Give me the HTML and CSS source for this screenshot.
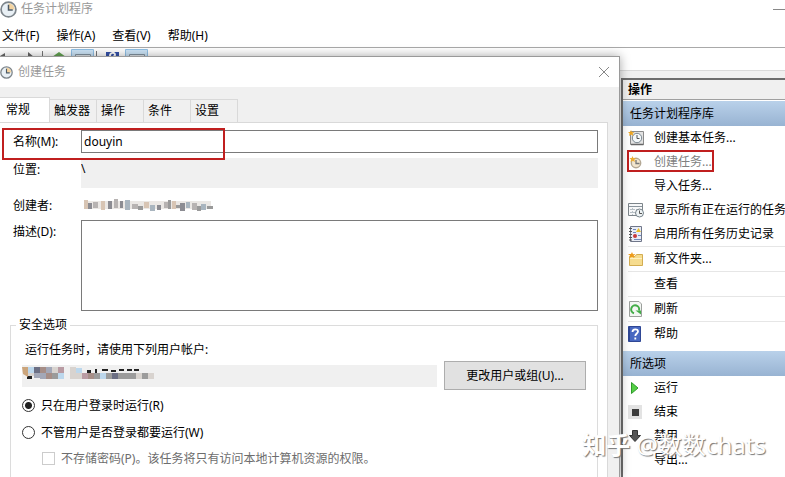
FILE: index.html
```html
<!DOCTYPE html>
<html lang="zh-CN">
<head>
    <meta charset="UTF-8">
    <meta name="viewport" content="width=device-width, initial-scale=1.0">
    <title>任务计划程序</title>
    <link rel="stylesheet" href="styles.css">
</head>
<body>

<div class="window">
    <header class="titlebar">
        <svg class="clock" viewBox="0 0 16 16" width="17" height="17">
            <circle cx="8" cy="8" r="7" fill="#e9f0f5" stroke="#7d858b" stroke-width="1.6"/>
            <path d="M8 8V2.2A5.8 5.8 0 0 1 13.8 8z" fill="#f3d3a0"/>
            <path d="M8 3.5V8.5H12" fill="none" stroke="#4d5a66" stroke-width="1.4"/>
        </svg>
        <h1>任务计划程序</h1>
        <button class="minimize" type="button" aria-label="最小化"></button>
    </header>

    <nav class="menubar">
        <a href="#">文件(F)</a>
        <a href="#">操作(A)</a>
        <a href="#">查看(V)</a>
        <a href="#">帮助(H)</a>
    </nav>

    <div class="toolbar">
        <svg viewBox="0 0 160 20" width="160" height="20">
            <path d="M0 8L5 5V11zM28 4L34 9H28z" fill="#666"/>
            <path d="M42.500 3V18M96.500 3V18" stroke="#777"/>
            <path d="M52 9L59 4L66 9V14H52z" fill="#63a352"/>
            <path d="M71.500 1.500H93.500V18H71.500zM125.500 1.500H147.500V18H125.500z" fill="#cce4f7" stroke="#90c0e6"/>
            <path d="M75.500 6.500H90.500V16H75.500zM129.500 6.500H144.500V16H129.500z" fill="#dfe5ea" stroke="#8494a1"/>
            <path d="M106 4H119V18H106z" fill="#3552a8"/>
            <path d="M110 8C110 4 115 4 115 7L113 10" fill="none" stroke="#fff" stroke-width="2"/>
        </svg>
    </div>

    <div class="workspace">
        <aside class="actions">
            <h2>操作</h2>
            <h3>任务计划程序库</h3>
            <ul>
                <li><a href="#">
                    <svg viewBox="0 0 16 16" width="16" height="16">
                        <path d="M2.500 1.500H15.500V14.500H2.500z" fill="#e2e2e2" stroke="#8a8a8a"/>
                        <path d="M3 14.500H15.500" stroke="#666" stroke-width="1.500"/>
                        <circle cx="9" cy="8" r="4.700" fill="#f4f8fa" stroke="#7a8790"/>
                        <path d="M9 5V8.500H11.500" fill="none" stroke="#555"/>
                        <path d="M3 0L4 2.200L6.500 2L4.600 3.700L5.500 6L3 4.600L1 6L1.600 3.600L0 2L2.200 2z" fill="#eda521"/>
                    </svg>创建基本任务...</a></li>
                <li><a href="#" class="current">
                    <svg viewBox="0 0 16 16" width="16" height="16">
                        <circle cx="8" cy="9" r="4.700" fill="#f2e6cf" stroke="#b4a895" stroke-width="1.400"/>
                        <path d="M8 6V9.500H11.500" fill="none" stroke="#777" stroke-width="1.300"/>
                        <path d="M4.500 2L5.500 4.200L8 4L6.200 5.700L7 8L4.700 6.700L2.500 8L3 5.600L1.500 4L3.700 4z" fill="#edad31"/>
                    </svg>创建任务...</a></li>
                <li><a href="#"><span class="blank"></span>导入任务...</a></li>
                <li><a href="#">
                    <svg viewBox="0 0 16 16" width="16" height="16">
                        <path d="M.5 1.500H14.500V13.500H.5z" fill="#f7f8f9" stroke="#7d858b"/>
                        <path d="M1 4.500H14" stroke="#8a949c"/>
                        <path d="M2 7.500H9M2 10.500H8M4.500 6V13" stroke="#b7bfc5" stroke-dasharray="2 1"/>
                        <circle cx="11.500" cy="11" r="4" fill="#eef3f5" stroke="#77838b"/>
                        <path d="M11.500 8.500V11.500H14" fill="none" stroke="#555"/>
                    </svg>显示所有正在运行的任务</a></li>
                <li><a href="#">
                    <svg viewBox="0 0 16 16" width="16" height="16">
                        <path d="M2.500 .5H13.500V15.500H2.500z" fill="#e9edf6" stroke="#70778a"/>
                        <path d="M1 2.500H4M1 5.500H4M1 8.500H4M1 11.500H4M1 14H4" stroke="#555"/>
                        <path d="M5 3.500H8M5 6.500H8M10 9.500H13M6 13.500H13" stroke="#7289bb"/>
                        <path d="M10.500 2L13 6H8z" fill="#edbe25"/>
                        <circle cx="7" cy="10" r="2" fill="#c8393b"/>
                    </svg>启用所有任务历史记录</a></li>
                <li class="split"><a href="#">
                    <svg viewBox="0 0 16 16" width="16" height="16">
                        <path d="M1.500 5.500H7L8.500 3.500H14.500V14.500H1.500z" fill="#f6dc8f" stroke="#d3ad51"/>
                        <path d="M2 7.500H14" stroke="#fff1bf"/>
                        <path d="M4 1L5 3.200L7.500 3L5.700 4.700L6.500 7L4 5.700L1.500 7L2 4.600L0 3L3 3z" fill="#ee9c1c"/>
                    </svg>新文件夹...</a></li>
                <li class="split"><a href="#"><span class="blank"></span>查看</a></li>
                <li class="split"><a href="#">
                    <svg viewBox="0 0 16 16" width="16" height="16">
                        <path d="M1.500 .5H11L13.500 3V15.500H1.500z" fill="#f4f6f4" stroke="#9ca09c"/>
                        <path d="M6 12.200A4 4 0 1 1 11 9.500" fill="none" stroke="#43ad48" stroke-width="2"/>
                        <path d="M7.500 9.500H13V13.500z" fill="#43ad48"/>
                    </svg>刷新</a></li>
                <li class="split"><a href="#">
                    <svg viewBox="0 0 16 16" width="16" height="16">
                        <path d="M.5 .5H12.500V15.500H.5z" fill="#4868c1" stroke="#2f4795"/>
                        <path d="M1.500 1V15" stroke="#2f4795"/>
                        <path d="M4.500 6C4.500 2.500 10 2.500 10 5.500C10 7.500 7.300 7.500 7.300 10M7.300 11.500V13.500" fill="none" stroke="#fff" stroke-width="1.800"/>
                    </svg>帮助</a></li>
            </ul>
            <h3>所选项</h3>
            <ul>
                <li><a href="#">
                    <svg viewBox="0 0 16 16" width="16" height="16">
                        <path d="M3.500 2.500L10 8L3.500 13.500z" fill="#55cf45" stroke="#2f9c2b"/>
                    </svg>运行</a></li>
                <li><a href="#">
                    <svg viewBox="0 0 16 16" width="16" height="16">
                        <path d="M0 1H14V15H0z" fill="#e3e3e3"/>
                        <path d="M4 5H11V12H4z" fill="#3d3d3d"/>
                    </svg>结束</a></li>
                <li><a href="#">
                    <svg viewBox="0 0 16 16" width="16" height="16">
                        <path d="M4.500 2.500H9.500V7.500H12.500L7 13.500L1.500 7.500H4.500z" fill="#555" stroke="#333"/>
                    </svg>禁用</a></li>
                <li><a href="#"><span class="blank"></span>导出...</a></li>
            </ul>
        </aside>
    </div>

    <section class="dialog">
        <header class="dialog-title">
            <svg class="clock" viewBox="0 0 16 16" width="13" height="13">
                <circle cx="8" cy="8" r="7" fill="#e9f0f5" stroke="#7d858b" stroke-width="1.6"/>
                <path d="M8 8V2.200A5.800 5.800 0 0 1 13.800 8z" fill="#f3d3a0"/>
                <path d="M8 3.500V8.500H12" fill="none" stroke="#4d5a66" stroke-width="1.400"/>
            </svg>
            <h2>创建任务</h2>
            <button class="close" type="button" aria-label="关闭">
                <svg viewBox="0 0 12 12" width="12" height="12"><path d="M1 1L11 11M11 1L1 11" stroke="#888"/></svg>
            </button>
        </header>

        <div class="tabs">
            <button type="button" class="tab active">常规</button>
            <button type="button" class="tab">触发器</button>
            <button type="button" class="tab">操作</button>
            <button type="button" class="tab">条件</button>
            <button type="button" class="tab">设置</button>
        </div>

        <form class="page">
            <div class="field name">
                <label for="name">名称(M):</label>
                <input type="text" id="name" value="douyin">
                <span class="highlight"></span>
            </div>
            <div class="field location">
                <label for="location">位置:</label>
                <input type="text" id="location" value="\" readonly>
            </div>
            <div class="field author">
                <span>创建者:</span>
                <svg viewBox="0 0 134 16" width="134" height="16">
                    <path d="M3 4H130V12H3z" fill="#ebe8e5"/>
                    <path d="M3 3H7V12H3zM20 4H24V13H20zM63 5H68V11H63zM91 4H95V12H91z" fill="#d8c5b4"/>
                    <path d="M7 6H11V12H7zM27 4H31V12H27zM39 4H42V11H39zM76 8H80V13H76zM99 6H104V14H99z" fill="#8c8c92"/>
                    <path d="M12 5H17V11H12zM33 2H37V11H33zM51 7H57V12H51zM83 5H87V11H83zM111 6H116V13H111z" fill="#b7b3b2"/>
                    <path d="M44 3H49V13H44zM69 8H74V14H69zM105 5H109V11H105zM120 7H125V13H120z" fill="#a9b5bf"/>
                    <path d="M57 9H62V13H57zM87 3H90V12H87zM95 8H99V11H95zM116 9H120V14H116zM126 9H132V12H126z" fill="#9a9a9a"/>
                </svg>
            </div>
            <div class="field description">
                <label for="description">描述(D):</label>
                <textarea id="description"></textarea>
            </div>

            <fieldset>
                <legend>安全选项</legend>
                <p>运行任务时，请使用下列用户帐户:</p>
                <div class="account">
                    <div class="account-name">
                        <svg viewBox="0 0 134 16" width="134" height="16">
                            <path d="M65 5H69V8H65zM73 4H75V8H73zM80 4H86V6H80zM89 5H94V7H89zM97 4H102V6H97zM105 4H110V6H105zM112 4H117V6H112zM5 11H10V14H5z" fill="#222"/>
                            <path d="M0 2H6V8L6 12L1 9z" fill="#cba57c"/>
                            <path d="M6 2H12V8H6zM54 3H60V8H54zM78 8H84V14H78zM36 8H42V14H36z" fill="#bcd7ec"/>
                            <path d="M12 2H18V8H12zM90 8H96V14H90z" fill="#6c6f84"/>
                            <path d="M18 2H24V8H18zM24 8H30V14H24zM66 8H72V14H66z" fill="#a68e87"/>
                            <path d="M30 8H36V14H30zM84 8H90V14H84zM96 8H114V14H96zM120 8H126V14H120zM72 8H78V14H72z" fill="#9b9b9b"/>
                            <path d="M36 2H42V8H36zM60 8H66V14H60z" fill="#b99ba3"/>
                            <path d="M24 2H30V8H24zM18 8H24V14H18zM12 8H18V13H12z" fill="#a3a8b8"/>
                            <path d="M30 2H36V8H30zM6 8H12V11H6zM48 2H54V14H48zM54 8H60V14H54zM114 8H120V14H114zM126 8H132V14H126z" fill="#d8d3cf"/>
                        </svg>
                    </div>
                    <button type="button" class="change">更改用户或组(U)...</button>
                </div>
                <label class="option"><input type="radio" name="logon" checked>只在用户登录时运行(R)</label>
                <label class="option"><input type="radio" name="logon">不管用户是否登录都要运行(W)</label>
                <label class="option sub"><input type="checkbox" disabled>不存储密码(P)。该任务将只有访问本地计算机资源的权限。</label>
            </fieldset>
        </form>
    </section>

    <div class="watermark"><b>知乎</b> @数数chats</div>
</div>

</body>
</html>
```
FILE: styles.css
```css
*, *::after {
    box-sizing: border-box;
}

body {
    margin: 0;
    background-color: white;
    color: black;
    font-family: "Noto Sans", "Noto Sans CJK SC", sans-serif;
    font-size: 12px;
    line-height: 18px;
}

h1, h2, h3, p, ul {
    margin: 0;
    padding: 0;
    font-size: 12px;
    font-weight: normal;
}

button, input, textarea {
    margin: 0;
    font: inherit;
    color: inherit;
}

a {
    color: inherit;
    text-decoration: none;
}

/* Ventana principal */
.window {
    position: relative;
    display: flex;
    flex-direction: column;
    height: 100vh;
    overflow: hidden;
}

.titlebar {
    display: flex;
    align-items: center;
    gap: 4px;
    height: 18px;
    color: #999;
}

.minimize {
    width: 12px;
    height: 1px;
    margin-left: auto;
    padding: 0;
    border: none;
    background-color: #888;
}

.menubar {
    display: flex;
    gap: 17px;
    height: 30px;
    padding: 9px 2px 0;
    border-bottom: 1px solid #a9a9a9;
}

.toolbar {
    height: 23px;
    border-bottom: 1px solid #d9d9d9;
}

.workspace {
    display: flex;
    flex: 1;
    justify-content: flex-end;
    min-height: 0;
    padding-top: 7px;
    background-color: #f0f0f0;
}

.actions {
    width: 164px;
    overflow: hidden;
    border-top: 2px solid #6d6d6d;
    border-left: 2px solid #6d6d6d;
    background-color: white;
    white-space: nowrap;
}

.actions h2 {
    height: 20px;
    padding: 1px 5px;
    border-bottom: 1px solid #a0a0a0;
    background-color: #f0f0f0;
    font-weight: bold;
}

.actions h3 {
    height: 25px;
    padding: 4px 7px;
    background: linear-gradient(#b9d1ea, #98b3d2);
}

.actions h2 + h3 {
    margin-top: 1px;
}

.actions ul {
    list-style: none;
}

.actions ul + h3 {
    margin-top: 5px;
}

.actions li {
    padding-left: 5px;
}

.actions li a {
    display: flex;
    align-items: center;
    gap: 10px;
    height: 24px;
}

.actions li svg, .blank {
    flex: none;
    width: 16px;
}

.actions .split a {
    height: 25px;
    border-top: 1px solid #e6e6e6;
}

.actions .current {
    position: relative;
    color: #808080;
}

.actions .current::after {
    content: "";
    position: absolute;
    top: 0;
    left: -1px;
    width: 87px;
    height: 22px;
    border: 2px solid #c01f1f;
}

/* Cuadro de diálogo */
.dialog {
    position: absolute;
    top: 56px;
    right: 165px;
    bottom: 0;
    left: 0;
    display: flex;
    flex-direction: column;
    border-top: 1px solid #9a9a9a;
    border-right: 1px solid #9a9a9a;
    background-color: #f0f0f0;
    box-shadow: 0 0 10px rgba(0, 0, 0, 0.35);
}

.dialog-title {
    display: flex;
    align-items: center;
    gap: 5px;
    height: 30px;
    padding-right: 9px;
    background-color: white;
    color: #999;
}

.close {
    display: flex;
    margin-left: auto;
    padding: 0;
    border: none;
    background: none;
}

.tabs {
    display: flex;
    align-items: flex-end;
    height: 35px;
}

.tab {
    width: 47px;
    height: 23px;
    padding: 0 4px;
    border: 1px solid #d9d9d9;
    border-left: none;
    border-bottom: none;
    background-color: #f0f0f0;
    text-align: left;
}

.tab.active {
    width: 50px;
    height: 25px;
    padding: 0 6px;
    background-color: white;
}

.page {
    flex: 1;
    min-height: 0;
    margin-right: 11px;
    padding: 7px 9px 0 10px;
    overflow: hidden;
    border-top: 1px solid #d9d9d9;
    border-right: 1px solid #d9d9d9;
    background-color: white;
}

.field {
    position: relative;
    display: grid;
    grid-template-columns: 68px 1fr;
    padding-left: 3px;
}

.field input, .field textarea {
    width: 100%;
    padding: 0 2px;
    border: 1px solid #7a7a7a;
    border-radius: 0;
    background-color: white;
    resize: none;
}

.name {
    z-index: 1;
    height: 28px;
}

.name label {
    padding-top: 3px;
}

.name input {
    height: 23px;
}

.highlight {
    position: absolute;
    top: -2px;
    left: -8px;
    width: 223px;
    height: 32px;
    border: 2px solid #c01f1f;
}

.location {
    height: 39px;
}

.location label {
    padding-top: 3px;
}

.location input {
    height: 30px;
    padding: 0 0 9px;
    border: none;
    background-color: #f0f0f0;
}

.author {
    height: 23px;
}

.description label {
    padding-top: 3px;
}

.description textarea {
    height: 91px;
}

fieldset {
    height: 200px;
    margin: 5px 0 0;
    padding: 7px 11px 0;
    border: 1px solid #dcdcdc;
}

fieldset p {
    padding-left: 3px;
}

legend {
    margin-left: -6px;
    padding: 0 3px;
}

.account {
    display: flex;
    align-items: center;
    gap: 7px;
    height: 33px;
}

.account-name {
    flex: 1;
    height: 22px;
    background-color: #f0f0f0;
}

.change {
    width: 142px;
    height: 29px;
    padding: 0;
    border: 1px solid #adadad;
    background-color: #e1e1e1;
}

.option {
    display: flex;
    align-items: center;
    gap: 6px;
    height: 27px;
}

.option input {
    appearance: none;
    width: 13px;
    height: 13px;
    border: 1px solid #333;
    border-radius: 50%;
    background-color: white;
}

.option input:checked {
    background: radial-gradient(circle, #222 3px, white 4px);
}

.option.sub {
    height: 25px;
    padding-left: 20px;
    color: #6d6d6d;
}

.option.sub input {
    border-color: #ccc;
    border-radius: 0;
}

/* Marca de agua */
.watermark {
    position: absolute;
    right: 19px;
    bottom: 16px;
    color: white;
    font-size: 24px;
    line-height: 32px;
    text-shadow: 1px 1px 1px #777;
}
```
